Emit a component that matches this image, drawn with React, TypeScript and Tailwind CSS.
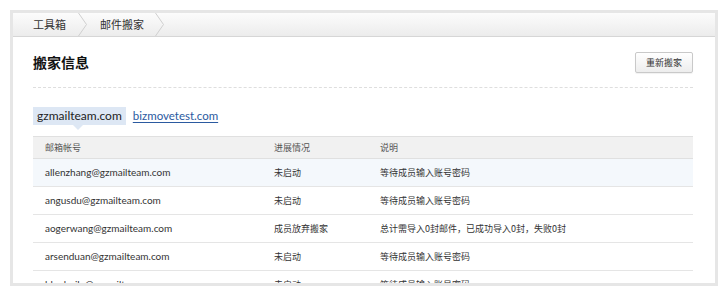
import React from 'react';

const rows = [
  { email: 'allenzhang@gzmailteam.com', status: '未启动', note: '等待成员输入账号密码' },
  { email: 'angusdu@gzmailteam.com', status: '未启动', note: '等待成员输入账号密码' },
  { email: 'aogerwang@gzmailteam.com', status: '成员放弃搬家', note: '总计需导入0封邮件，已成功导入0封，失败0封' },
  { email: 'arsenduan@gzmailteam.com', status: '未启动', note: '等待成员输入账号密码' },
  { email: 'bluehuilu@gzmailteam.com', status: '未启动', note: '等待成员输入账号密码' },
];

const Chevron = () => (
  <svg width="10" height="23" viewBox="0 0 10 23" className="shrink-0">
    <polyline points="0.5,0 8.5,11.5 0.5,23" fill="none" stroke="#cfcfcf" strokeWidth="1" />
  </svg>
);

export default function App() {
  const cjk = { fontFamily: '"Noto Sans CJK SC", "Liberation Sans", sans-serif' };
  const latin = { fontFamily: 'Lato, "Noto Sans CJK SC", sans-serif' };

  return (
    <div className="w-[727px] h-[294px] bg-white pl-[10px] pt-[10px]" style={cjk}>
      <div className="w-[708px] h-[276px] border-[3px] border-[#e6e6e6] overflow-hidden bg-white">
        {/* breadcrumb */}
        <div className="h-[24px] flex items-center bg-gradient-to-b from-[#fcfcfc] to-[#ececec] border-b border-[#d6d6d6] text-[11px] text-[#333]">
          <span className="pl-[20px] pr-[12px]">工具箱</span>
          <Chevron />
          <span className="pl-[12px] pr-[11px]">邮件搬家</span>
          <Chevron />
        </div>

        <div className="pl-[20px] pr-[22px]">
          {/* title */}
          <div className="flex items-center justify-between pt-[15px] pb-[14px] border-b border-dashed border-[#dedede]">
            <h1 className="text-[14px] font-bold text-[#111] leading-[21px]">搬家信息</h1>
            <button className="h-[21px] w-[58px] text-[9px] text-[#333] border border-[#c9c9c9] rounded-[2px] bg-gradient-to-b from-white to-[#ededed] shadow-[0_1px_1px_rgba(0,0,0,0.06)]">
              重新搬家
            </button>
          </div>

          {/* domain tabs */}
          <div className="flex items-center gap-[7px] mt-[19px]" style={latin}>
            <div className="relative bg-[#dde7f4] text-[#222] h-[18px] leading-[18px] px-[4px] text-[12px]">
              gzmailteam.com
              <span className="absolute left-[40px] top-[18px] w-0 h-0 border-l-[5px] border-r-[5px] border-t-[5px] border-l-transparent border-r-transparent border-t-[#dde7f4]" />
            </div>
            <a href="#" className="text-[#2b5aa0] underline underline-offset-2 leading-[18px] text-[11.5px]">bizmovetest.com</a>
          </div>

          {/* table */}
          <table className="w-full mt-[11px] border-collapse text-[10px] text-[#333]">
            <thead>
              <tr className="bg-[#f1f1f1] h-[22px] border-t border-b border-[#e0e0e0] text-[9px] text-[#555]">
                <th className="text-left font-normal pl-[12px] w-[241px]">邮箱帐号</th>
                <th className="text-left font-normal w-[106px]">进展情况</th>
                <th className="text-left font-normal">说明</th>
              </tr>
            </thead>
            <tbody>
              {rows.map((r, i) => (
                <tr key={r.email} className={`h-[28px] border-b border-[#e5e5e5] ${i === 0 ? 'bg-[#f4f8fc]' : ''}`}>
                  <td className="pl-[12px]" style={latin}>{r.email}</td>
                  <td className="text-[9px]">{r.status}</td>
                  <td className="text-[9px]">{r.note}</td>
                </tr>
              ))}
            </tbody>
          </table>
        </div>
      </div>
    </div>
  );
}
